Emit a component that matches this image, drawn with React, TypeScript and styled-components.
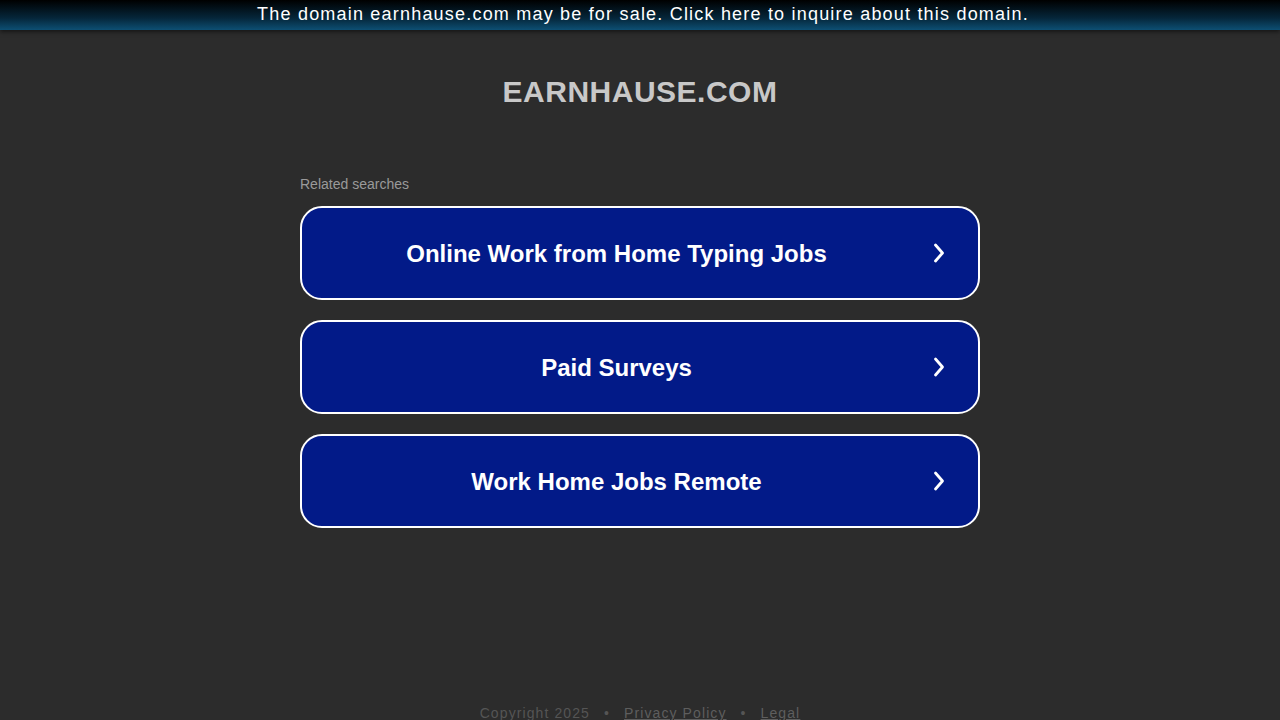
import React from "react";
import styled, { createGlobalStyle } from "styled-components";

const Global = createGlobalStyle`
  html, body { margin: 0; padding: 0; background: #2c2c2c; }
  body { font-family: "Liberation Sans", Arial, sans-serif; }
  * { box-sizing: border-box; }
`;

const Page = styled.div`
  min-height: 720px;
  display: flex;
  flex-direction: column;
  align-items: center;
`;

const Banner = styled.a`
  width: 100%;
  height: 30px;
  padding: 0 0 2px 6px;
  display: flex;
  align-items: center;
  justify-content: center;
  background: linear-gradient(to bottom, #000000 0%, #05263a 60%, #0d4f73 100%);
  box-shadow: 0 2px 4px rgba(0, 0, 0, 0.5);
  color: #ffffff;
  font-size: 18px;
  letter-spacing: 1.2px;
  text-decoration: none;
`;

const Title = styled.h1`
  margin: 47px 0 0;
  font-size: 30px;
  line-height: 30px;
  font-weight: 700;
  letter-spacing: 0.5px;
  color: #c8c8c8;
`;

const Searches = styled.div`
  width: 680px;
  margin-top: 69px;
  display: flex;
  flex-direction: column;
`;

const Label = styled.div`
  font-size: 14px;
  line-height: 16px;
  color: #9a9a9a;
  margin-bottom: 14px;
`;

const List = styled.div`
  display: flex;
  flex-direction: column;
  gap: 20px;
`;

const Item = styled.a`
  height: 94px;
  display: flex;
  align-items: center;
  padding: 2px 0 0 16px;
  border: 2px solid #ffffff;
  border-radius: 22px;
  background: #021a88;
  color: #ffffff;
  text-decoration: none;
`;

const ItemText = styled.span`
  flex: 1;
  text-align: center;
  font-size: 24px;
  font-weight: 700;
`;

const Arrow = styled.span`
  width: 48px;
  margin-right: 15px;
  margin-bottom: 2px;
  display: flex;
  justify-content: center;
`;

const Footer = styled.div`
  margin-top: auto;
  height: 20px;
  font-size: 14px;
  letter-spacing: 1.1px;
  color: #555555;
  display: flex;
  gap: 14px;
  align-items: flex-start;
  transform: translateY(5px);
`;

const FooterLink = styled.a`
  color: #5e5e5e;
  text-decoration: underline;
`;

const Chevron = () => (
  <svg width="16" height="22" viewBox="0 0 16 22" fill="none">
    <path d="M4.5 3 L11.5 11 L4.5 19" stroke="#ffffff" strokeWidth="2.8" strokeLinecap="round" strokeLinejoin="round" />
  </svg>
);

const items = [
  "Online Work from Home Typing Jobs",
  "Paid Surveys",
  "Work Home Jobs Remote",
];

export default function App() {
  return (
    <Page>
      <Global />
      <Banner href="#">The domain earnhause.com may be for sale. Click here to inquire about this domain.</Banner>
      <Title>EARNHAUSE.COM</Title>
      <Searches>
        <Label>Related searches</Label>
        <List>
          {items.map((t) => (
            <Item href="#" key={t}>
              <ItemText>{t}</ItemText>
              <Arrow>
                <Chevron />
              </Arrow>
            </Item>
          ))}
        </List>
      </Searches>
      <Footer>
        <span>Copyright 2025</span>
        <span>•</span>
        <FooterLink href="#">Privacy Policy</FooterLink>
        <span>•</span>
        <FooterLink href="#">Legal</FooterLink>
      </Footer>
    </Page>
  );
}
